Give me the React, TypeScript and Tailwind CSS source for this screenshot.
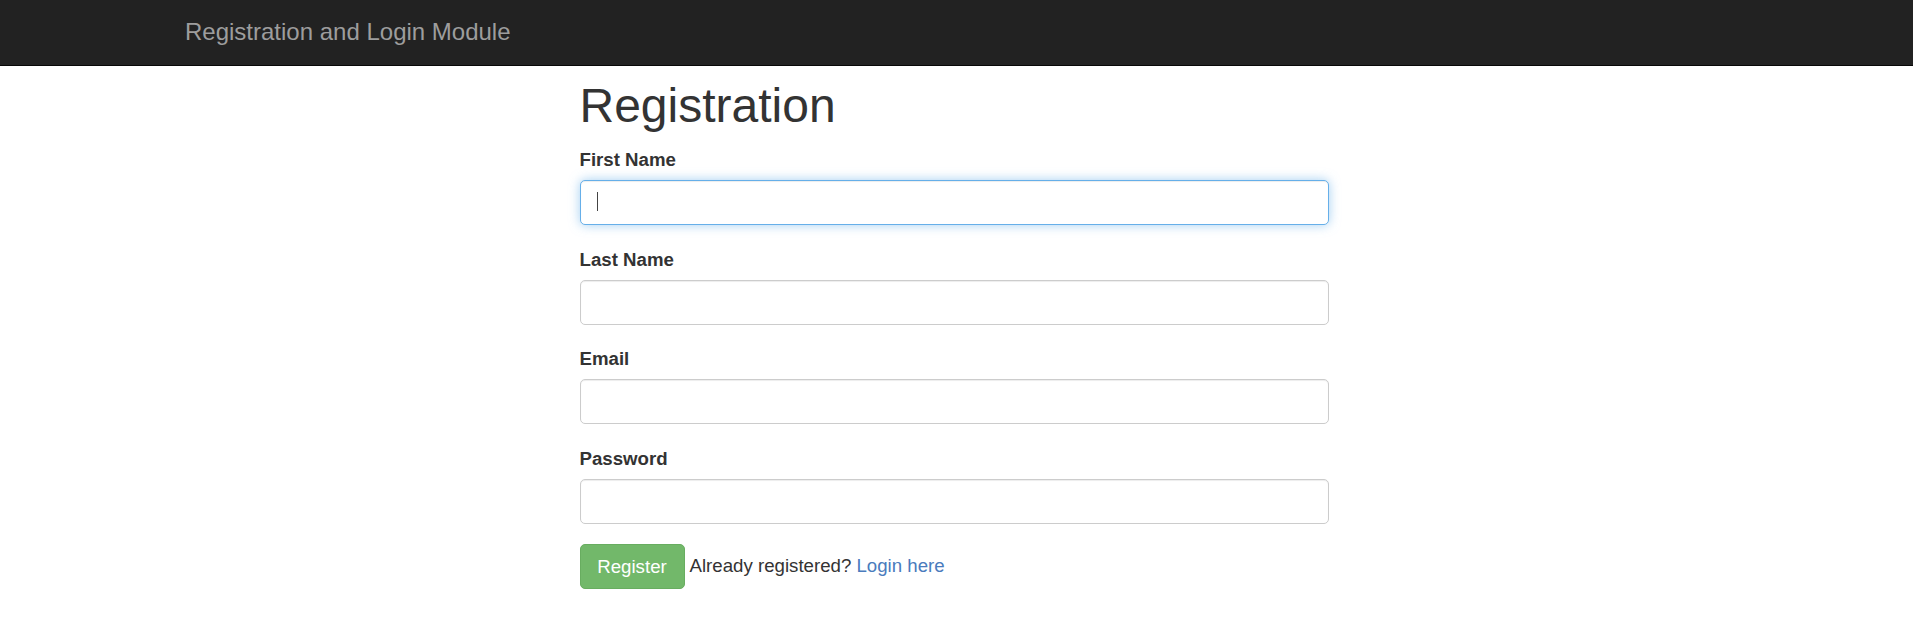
import React from "react";

const font = { fontFamily: '"Liberation Sans", Arial, Helvetica, sans-serif' };

function Field({ label, type = "text", focused = false }: { label: string; type?: string; focused?: boolean }) {
  return (
    <div className="mb-[20.5px]">
      <label className="block text-[18.67px] leading-[27px] font-bold text-[#333333] mb-[7px]">{label}</label>
      <div className="relative">
        <input
          type={type}
          readOnly
          className={
            "block w-full h-[45px] rounded-[5px] border bg-white px-[16px] text-[18.67px] text-[#555555] outline-none " +
            (focused
              ? "border-[#66afe9] shadow-[inset_0_1px_1px_rgba(0,0,0,0.075),0_0_11px_rgba(102,175,233,0.6)]"
              : "border-[#cccccc] shadow-[inset_0_1px_1px_rgba(0,0,0,0.075)]")
          }
        />
        {focused && (
          <span className="absolute left-[17px] top-[12px] h-[19px] w-px bg-[#444444]" />
        )}
      </div>
    </div>
  );
}

export default function App() {
  return (
    <div className="min-h-[622px] bg-white text-[#333333]" style={font}>
      <nav className="h-[66px] bg-[#222222] border-b border-[#080808]">
        <div className="pl-[185px] pt-[19px]">
          <span className="text-[24px] leading-[26px] text-[#9d9d9d]">Registration and Login Module</span>
        </div>
      </nav>
      <div className="ml-[579.5px] w-[749px]">
        <h1 className="mt-[13px] mb-[14px] text-[48px] leading-[53px] font-normal text-[#333333]">Registration</h1>
        <form>
          <Field label="First Name" focused />
          <Field label="Last Name" />
          <Field label="Email" type="email" />
          <Field label="Password" type="password" />
          <div className="flex items-center mt-[1px]">
            <button
              type="button"
              className="h-[45px] w-[105px] rounded-[5px] border border-[#68ad60] bg-[#72b86a] text-[18.67px] text-white"
            >
              Register
            </button>
            <span className="ml-[5px] text-[18.67px] leading-[27px] text-[#333333] -mt-[3px]">
              Already registered? <a href="#" className="text-[#4a7bbd]">Login here</a>
            </span>
          </div>
        </form>
      </div>
    </div>
  );
}
